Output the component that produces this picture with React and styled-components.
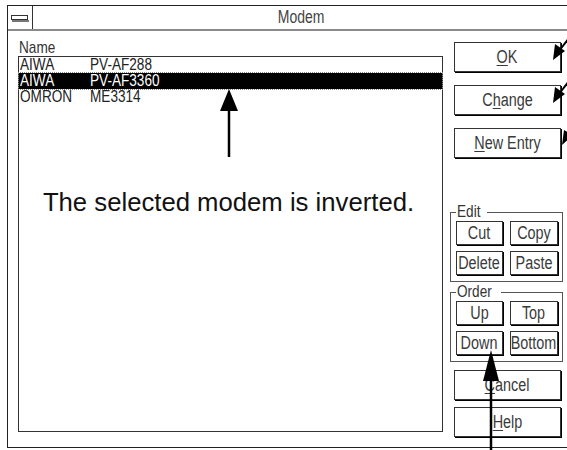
import React from 'react';
import styled, { createGlobalStyle } from 'styled-components';

const sans = `"Liberation Sans", Arial, sans-serif`;

const GlobalStyle = createGlobalStyle`
  html, body {
    margin: 0;
    padding: 0;
    background: #fff;
  }
  body {
    overflow: hidden;
  }
`;

const modems = [
    { maker: 'AIWA', model: 'PV-AF288' },
    { maker: 'AIWA', model: 'PV-AF3360', selected: true },
    { maker: 'OMRON', model: 'ME3314' },
];

const App = () => {
    return (
        <>
            <GlobalStyle />
            <Pagina>
                <Ventana>
                    <BarraTitulo>
                        <MenuSistema>
                            <svg width="18" height="8" viewBox="0 0 18 8">
                                <rect x="0.5" y="0.5" width="16" height="4" fill="#fff" stroke="#333" />
                                <line x1="1" y1="6" x2="18" y2="6" stroke="#777" strokeWidth="2" />
                            </svg>
                        </MenuSistema>
                        <Titulo><Estrecho>Modem</Estrecho></Titulo>
                    </BarraTitulo>

                    <Cuerpo>
                        <ColumnaLista>
                            <Etiqueta><Estrecho origen="left">Name</Estrecho></Etiqueta>
                            <Lista>
                                {modems.map((m) => (
                                    <Fila key={m.model} selected={m.selected}>
                                        <Estrecho origen="left">{m.maker}</Estrecho>
                                        <Estrecho origen="left">{m.model}</Estrecho>
                                    </Fila>
                                ))}
                                <Anotacion>
                                    <svg width="20" height="68" viewBox="0 0 20 68">
                                        <polygon points="10,0 1,22 19,22" fill="#000" />
                                        <line x1="10" y1="20" x2="10" y2="68" stroke="#000" strokeWidth="2.5" />
                                    </svg>
                                    <Leyenda>The selected modem is inverted.</Leyenda>
                                </Anotacion>
                            </Lista>
                        </ColumnaLista>

                        <ColumnaBotones>
                            <Boton><Estrecho><u>O</u>K</Estrecho></Boton>
                            <Boton espacio={13}><Estrecho>C<u>h</u>ange</Estrecho></Boton>
                            <Boton espacio={13}><Estrecho><u>N</u>ew Entry</Estrecho></Boton>

                            <Grupo espacio={46}>
                                <Titular><Estrecho origen="left">Edit</Estrecho></Titular>
                                <Rejilla>
                                    <BotonChico><Estrecho>Cut</Estrecho></BotonChico>
                                    <BotonChico><Estrecho>Copy</Estrecho></BotonChico>
                                    <BotonChico><Estrecho>Delete</Estrecho></BotonChico>
                                    <BotonChico><Estrecho>Paste</Estrecho></BotonChico>
                                </Rejilla>
                            </Grupo>

                            <Grupo espacio={2}>
                                <Titular><Estrecho origen="left">Order</Estrecho></Titular>
                                <Rejilla>
                                    <BotonChico><Estrecho>Up</Estrecho></BotonChico>
                                    <BotonChico><Estrecho>Top</Estrecho></BotonChico>
                                    <BotonChico><Estrecho>Down</Estrecho></BotonChico>
                                    <BotonChico><Estrecho>Bottom</Estrecho></BotonChico>
                                </Rejilla>
                            </Grupo>

                            <Boton espacio={8}><Estrecho><u>C</u>ancel</Estrecho></Boton>
                            <Boton espacio={7}><Estrecho><u>H</u>elp</Estrecho></Boton>
                        </ColumnaBotones>
                    </Cuerpo>
                </Ventana>

                <Flechas width="567" height="450" viewBox="0 0 567 450">
                    <line x1="569" y1="38" x2="559" y2="51" stroke="#000" strokeWidth="2" />
                    <polygon points="553,60 555,44 565,51" fill="#000" />
                    <line x1="569" y1="81" x2="559" y2="94" stroke="#000" strokeWidth="2" />
                    <polygon points="553,103 555,87 565,94" fill="#000" />
                    <line x1="574" y1="124" x2="568" y2="136" stroke="#000" strokeWidth="2" />
                    <polygon points="562,145 564,130 573,135" fill="#000" />

                    <polygon points="491,350 483,381 499,381" fill="#000" />
                    <line x1="491" y1="378" x2="491" y2="450" stroke="#000" strokeWidth="2.5" />
                </Flechas>
            </Pagina>
        </>
    );
};

export default App;

const Pagina = styled.div`
    position: relative;
    width: 567px;
    height: 450px;
    overflow: hidden;
    padding: 5px 0 0 7px;
    box-sizing: border-box;
    font-family: ${sans};
    color: #333;
`;

const Estrecho = styled.span`
    display: inline-block;
    flex-shrink: 0;
    white-space: nowrap;
    transform: scaleX(0.8);
    transform-origin: ${(p) => p.origen || 'center'};
`;

const Ventana = styled.div`
    width: 563px;
    height: 443px;
    box-sizing: border-box;
    border: 1px solid #222;
    border-right: none;
    display: flex;
    flex-direction: column;
`;

const BarraTitulo = styled.div`
    display: flex;
    height: 23px;
    border-bottom: 2px solid #8a8a8a;
`;

const MenuSistema = styled.div`
    width: 25px;
    border-right: 1px solid #333;
    display: flex;
    align-items: center;
    justify-content: center;
    padding-top: 2px;
    box-sizing: border-box;
`;

const Titulo = styled.div`
    flex: 1;
    text-align: center;
    font-size: 17.5px;
    line-height: 23px;
    color: #444;
`;

const Cuerpo = styled.div`
    flex: 1;
    display: flex;
    gap: 7px;
    padding-left: 10px;
`;

const ColumnaLista = styled.div`
    display: flex;
    flex-direction: column;
    padding-top: 8px;
`;

const Etiqueta = styled.div`
    font-size: 17px;
    line-height: 17px;
    height: 17px;
    padding-left: 1px;
`;

const Lista = styled.div`
    position: relative;
    width: 425px;
    height: 376px;
    box-sizing: border-box;
    border: 1px solid #333;
`;

const Fila = styled.div`
    display: grid;
    grid-template-columns: 70px 1fr;
    height: 16px;
    line-height: 16px;
    font-size: 17px;
    padding-left: 1px;
    background: ${(p) => (p.selected ? '#000' : 'transparent')};
    color: ${(p) => (p.selected ? '#fff' : '#222')};
    outline: ${(p) => (p.selected ? '1px dotted #888' : 'none')};
`;

const Anotacion = styled.div`
    position: absolute;
    top: 32px;
    left: 0;
    right: 4px;
    display: flex;
    flex-direction: column;
    align-items: center;
`;

const Leyenda = styled.div`
    margin-top: 30px;
    font-family: ${sans};
    font-size: 25.7px;
    line-height: 30px;
    color: #111;
    white-space: nowrap;
`;

const ColumnaBotones = styled.div`
    width: 113px;
    padding-top: 11px;
    display: flex;
    flex-direction: column;
`;

const Boton = styled.button`
    width: 107px;
    height: 30px;
    margin: ${(p) => p.espacio || 0}px 0 0 4px;
    padding: 0;
    display: flex;
    align-items: center;
    justify-content: center;
    background: #fff;
    border: 1px solid #333;
    box-shadow: 1px 1px 0 #000;
    font-family: ${sans};
    font-size: 18px;
    color: #3a3a3a;

    u {
        text-underline-offset: 2px;
    }
`;

const Grupo = styled.fieldset`
    margin: ${(p) => p.espacio}px 0 0 0;
    padding: 1px 4px 6px 5px;
    border: 1px solid #555;
    min-width: 0;
`;

const Titular = styled.legend`
    padding: 0 1px;
    font-size: 17px;
    line-height: 16px;
    color: #333;
`;

const Rejilla = styled.div`
    display: grid;
    grid-template-columns: 47px 48px;
    column-gap: 7px;
    row-gap: 6px;
`;

const BotonChico = styled.button`
    height: 24px;
    padding: 0;
    display: flex;
    align-items: center;
    justify-content: center;
    overflow: visible;
    background: #fff;
    border: 1px solid #333;
    box-shadow: 1px 1px 0 #000;
    font-family: ${sans};
    font-size: 18px;
    color: #3a3a3a;
`;

const Flechas = styled.svg`
    position: absolute;
    top: 0;
    left: 0;
    pointer-events: none;
`;
